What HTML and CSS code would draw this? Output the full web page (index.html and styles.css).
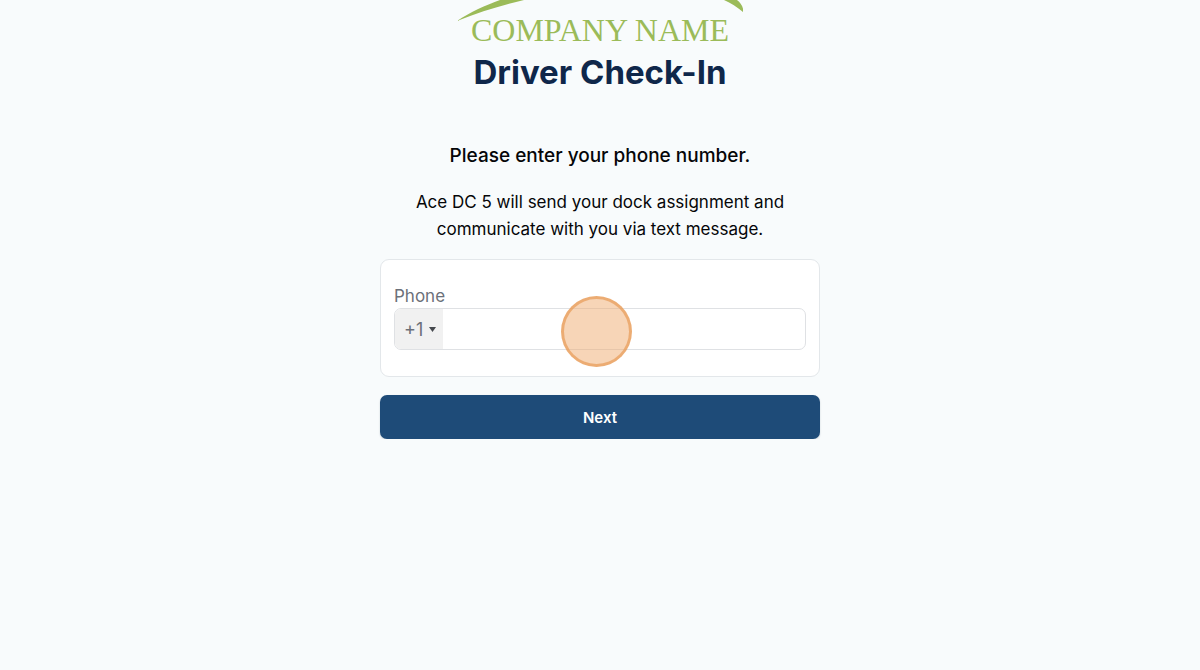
FILE: index.html
```html
<!DOCTYPE html>
<html lang="en">
<head>
<meta charset="utf-8">
<meta name="viewport" content="width=device-width, initial-scale=1">
<title>Driver Check-In</title>
<link rel="stylesheet" href="styles.css">
</head>
<body>
<main class="page">
  <header class="header">
    <div class="logo">
      <svg class="logo-arc" viewBox="0 0 286 22" aria-hidden="true">
        <path d="M0 21C13 12 29 5 43 0H67C46 5 22 12 0 21Z"/>
        <path d="M267 0H280C284 3 287 8 286 12C280 7 274 3 267 0Z"/>
      </svg>
      <span class="logo-name">COMPANY NAME</span>
    </div>
    <h1 class="title">Driver Check-In</h1>
  </header>
  <form class="form">
    <h2 class="prompt">Please enter your phone number.</h2>
    <p class="note">Ace DC 5 will send your dock assignment and communicate with you via text message.</p>
    <div class="card">
      <label class="label" for="phone">Phone</label>
      <div class="field">
        <button class="code" type="button" aria-label="Country code +1">
          <span>+1</span>
          <svg class="caret" viewBox="0 0 7 5" aria-hidden="true"><path d="M0 0H7L3.5 5Z"/></svg>
        </button>
        <input class="phone" id="phone" type="tel">
        <span class="pointer" aria-hidden="true"></span>
      </div>
    </div>
    <button class="next" type="submit">Next</button>
  </form>
</main>
</body>
</html>
```
FILE: styles.css
```css
* {
  box-sizing: border-box;
}

body {
  margin: 0;
  background: #f8fbfc;
  color: #050608;
  font-family: Inter, "Liberation Sans", sans-serif;
}

.page {
  max-width: 440px;
  margin: 0 auto;
}

.header {
  text-align: center;
}

.logo {
  display: flex;
  flex-direction: column;
  align-items: center;
  color: #9bbb59;
}

.logo-arc {
  width: 286px;
  height: 22px;
  fill: currentColor;
  margin-bottom: -8px;
}

.logo-name {
  font-family: "Liberation Serif", serif;
  font-size: 32px;
  line-height: 32px;
  white-space: nowrap;
}

.title {
  margin: 6px 0 0;
  color: #0f274a;
  font-size: 33px;
  font-weight: 700;
  line-height: 40px;
}

.form {
  display: flex;
  flex-direction: column;
  margin-top: 48px;
}

.prompt {
  margin: 0;
  font-size: 19px;
  font-weight: 500;
  line-height: 32px;
  text-align: center;
}

.note {
  margin: 17px 0 16px;
  padding: 0 32px;
  font-size: 17px;
  line-height: 27px;
  text-align: center;
}

.card {
  padding: 24px 13px 26px;
  background: #fff;
  border: 1px solid #e3e7ea;
  border-radius: 9px;
}

.label {
  display: block;
  color: #6c7079;
  font-size: 17px;
  line-height: 24px;
}

.field {
  position: relative;
  display: flex;
  height: 42px;
  border: 1px solid #dfe1e4;
  border-radius: 7px;
}

.code {
  display: flex;
  align-items: center;
  gap: 6px;
  padding: 0 7px 0 9px;
  border: 0;
  border-radius: 6px 0 0 6px;
  background: #f1f1f1;
  color: #6c7079;
  font: inherit;
  font-size: 18px;
}

.caret {
  width: 7px;
  height: 5px;
  fill: #45484d;
}

.phone {
  flex: 1;
  min-width: 0;
  padding: 0 12px;
  border: 0;
  border-radius: 0 6px 6px 0;
  background: transparent;
  font: inherit;
  font-size: 17px;
}

.pointer {
  position: absolute;
  top: -13px;
  left: calc(50% - 39px);
  width: 71px;
  height: 71px;
  border: 3px solid rgba(230, 150, 80, 0.65);
  border-radius: 50%;
  background: rgba(240, 172, 112, 0.5);
  pointer-events: none;
}

.next {
  height: 44px;
  margin-top: 18px;
  border: 0;
  border-radius: 7px;
  background: #1e4b78;
  box-shadow: 0 1px 2px rgba(15, 39, 74, 0.2);
  color: #fff;
  font: inherit;
  font-size: 15px;
  font-weight: 600;
}
```
